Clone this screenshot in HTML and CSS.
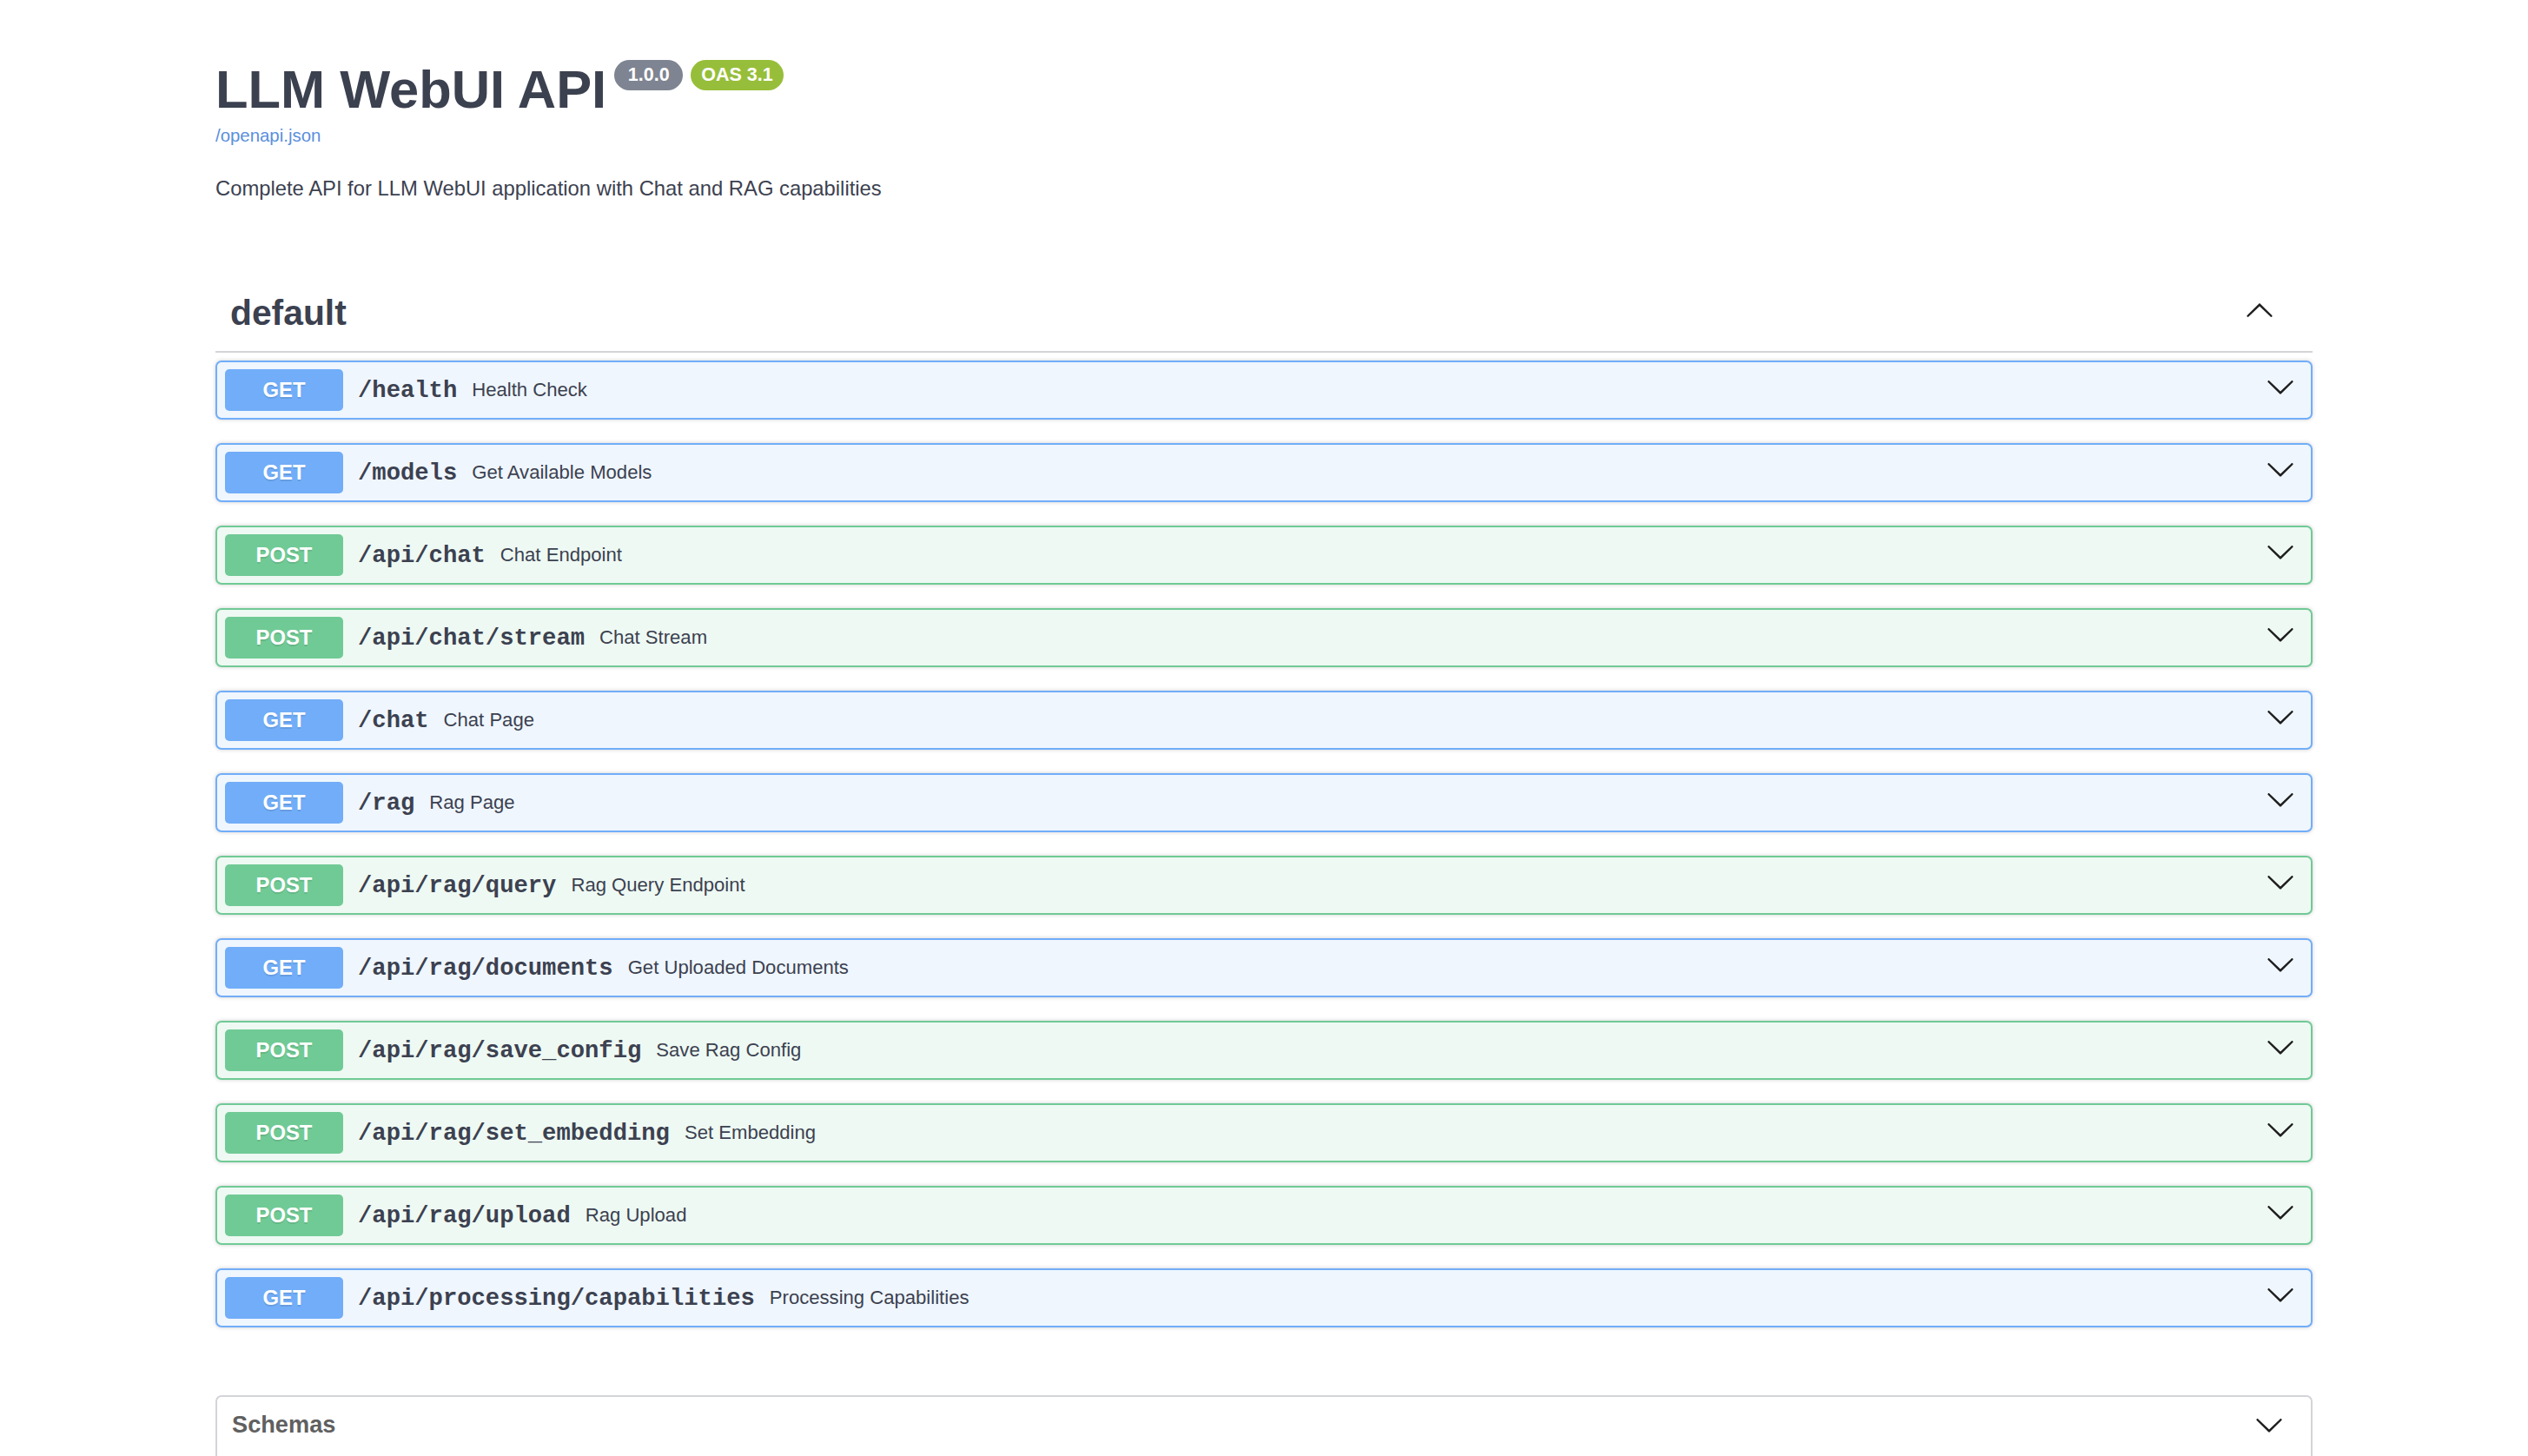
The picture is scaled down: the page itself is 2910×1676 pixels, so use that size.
FILE: index.html
```html
<!DOCTYPE html>
<html lang="en">
<head>
<meta charset="utf-8">
<title>LLM WebUI API</title>
<link rel="stylesheet" href="styles.css">
</head>
<body>
<div class="wrapper">
  <div class="info">
    <div class="title-row">
      <h2 class="title">LLM WebUI API</h2>
      <span class="badge badge-version">1.0.0</span>
      <span class="badge badge-oas">OAS 3.1</span>
    </div>
    <a class="base-url" href="#">/openapi.json</a>
    <p class="desc">Complete API for LLM WebUI application with Chat and RAG capabilities</p>
  </div>

  <section class="tag-section">
    <h3 class="tag">
      <span class="tag-name">default</span>
      <span class="tag-toggle">
        <svg class="chev" viewBox="0 0 20 20" width="34" height="34"><path transform="rotate(180 10 10)" d="M17.418 6.109c.272-.268.709-.268.979 0s.271.701 0 .969l-7.908 7.83c-.27.268-.707.268-.979 0l-7.908-7.83c-.27-.268-.27-.701 0-.969.271-.268.709-.268.979 0L10 13.25l7.418-7.141z"/></svg>
      </span>
    </h3>
    <div class="ops">
      <div class="op op-get"><span class="method">GET</span><span class="path">/health</span><span class="summary">Health Check</span><svg class="chev op-chev" viewBox="0 0 20 20" width="34" height="34"><path d="M17.418 6.109c.272-.268.709-.268.979 0s.271.701 0 .969l-7.908 7.83c-.27.268-.707.268-.979 0l-7.908-7.83c-.27-.268-.27-.701 0-.969.271-.268.709-.268.979 0L10 13.25l7.418-7.141z"/></svg></div>
      <div class="op op-get"><span class="method">GET</span><span class="path">/models</span><span class="summary">Get Available Models</span><svg class="chev op-chev" viewBox="0 0 20 20" width="34" height="34"><path d="M17.418 6.109c.272-.268.709-.268.979 0s.271.701 0 .969l-7.908 7.83c-.27.268-.707.268-.979 0l-7.908-7.83c-.27-.268-.27-.701 0-.969.271-.268.709-.268.979 0L10 13.25l7.418-7.141z"/></svg></div>
      <div class="op op-post"><span class="method">POST</span><span class="path">/api/chat</span><span class="summary">Chat Endpoint</span><svg class="chev op-chev" viewBox="0 0 20 20" width="34" height="34"><path d="M17.418 6.109c.272-.268.709-.268.979 0s.271.701 0 .969l-7.908 7.83c-.27.268-.707.268-.979 0l-7.908-7.83c-.27-.268-.27-.701 0-.969.271-.268.709-.268.979 0L10 13.25l7.418-7.141z"/></svg></div>
      <div class="op op-post"><span class="method">POST</span><span class="path">/api/chat/stream</span><span class="summary">Chat Stream</span><svg class="chev op-chev" viewBox="0 0 20 20" width="34" height="34"><path d="M17.418 6.109c.272-.268.709-.268.979 0s.271.701 0 .969l-7.908 7.83c-.27.268-.707.268-.979 0l-7.908-7.83c-.27-.268-.27-.701 0-.969.271-.268.709-.268.979 0L10 13.25l7.418-7.141z"/></svg></div>
      <div class="op op-get"><span class="method">GET</span><span class="path">/chat</span><span class="summary">Chat Page</span><svg class="chev op-chev" viewBox="0 0 20 20" width="34" height="34"><path d="M17.418 6.109c.272-.268.709-.268.979 0s.271.701 0 .969l-7.908 7.83c-.27.268-.707.268-.979 0l-7.908-7.83c-.27-.268-.27-.701 0-.969.271-.268.709-.268.979 0L10 13.25l7.418-7.141z"/></svg></div>
      <div class="op op-get"><span class="method">GET</span><span class="path">/rag</span><span class="summary">Rag Page</span><svg class="chev op-chev" viewBox="0 0 20 20" width="34" height="34"><path d="M17.418 6.109c.272-.268.709-.268.979 0s.271.701 0 .969l-7.908 7.83c-.27.268-.707.268-.979 0l-7.908-7.83c-.27-.268-.27-.701 0-.969.271-.268.709-.268.979 0L10 13.25l7.418-7.141z"/></svg></div>
      <div class="op op-post"><span class="method">POST</span><span class="path">/api/rag/query</span><span class="summary">Rag Query Endpoint</span><svg class="chev op-chev" viewBox="0 0 20 20" width="34" height="34"><path d="M17.418 6.109c.272-.268.709-.268.979 0s.271.701 0 .969l-7.908 7.83c-.27.268-.707.268-.979 0l-7.908-7.83c-.27-.268-.27-.701 0-.969.271-.268.709-.268.979 0L10 13.25l7.418-7.141z"/></svg></div>
      <div class="op op-get"><span class="method">GET</span><span class="path">/api/rag/documents</span><span class="summary">Get Uploaded Documents</span><svg class="chev op-chev" viewBox="0 0 20 20" width="34" height="34"><path d="M17.418 6.109c.272-.268.709-.268.979 0s.271.701 0 .969l-7.908 7.83c-.27.268-.707.268-.979 0l-7.908-7.83c-.27-.268-.27-.701 0-.969.271-.268.709-.268.979 0L10 13.25l7.418-7.141z"/></svg></div>
      <div class="op op-post"><span class="method">POST</span><span class="path">/api/rag/save_config</span><span class="summary">Save Rag Config</span><svg class="chev op-chev" viewBox="0 0 20 20" width="34" height="34"><path d="M17.418 6.109c.272-.268.709-.268.979 0s.271.701 0 .969l-7.908 7.83c-.27.268-.707.268-.979 0l-7.908-7.83c-.27-.268-.27-.701 0-.969.271-.268.709-.268.979 0L10 13.25l7.418-7.141z"/></svg></div>
      <div class="op op-post"><span class="method">POST</span><span class="path">/api/rag/set_embedding</span><span class="summary">Set Embedding</span><svg class="chev op-chev" viewBox="0 0 20 20" width="34" height="34"><path d="M17.418 6.109c.272-.268.709-.268.979 0s.271.701 0 .969l-7.908 7.83c-.27.268-.707.268-.979 0l-7.908-7.83c-.27-.268-.27-.701 0-.969.271-.268.709-.268.979 0L10 13.25l7.418-7.141z"/></svg></div>
      <div class="op op-post"><span class="method">POST</span><span class="path">/api/rag/upload</span><span class="summary">Rag Upload</span><svg class="chev op-chev" viewBox="0 0 20 20" width="34" height="34"><path d="M17.418 6.109c.272-.268.709-.268.979 0s.271.701 0 .969l-7.908 7.83c-.27.268-.707.268-.979 0l-7.908-7.83c-.27-.268-.27-.701 0-.969.271-.268.709-.268.979 0L10 13.25l7.418-7.141z"/></svg></div>
      <div class="op op-get"><span class="method">GET</span><span class="path">/api/processing/capabilities</span><span class="summary">Processing Capabilities</span><svg class="chev op-chev" viewBox="0 0 20 20" width="34" height="34"><path d="M17.418 6.109c.272-.268.709-.268.979 0s.271.701 0 .969l-7.908 7.83c-.27.268-.707.268-.979 0l-7.908-7.83c-.27-.268-.27-.701 0-.969.271-.268.709-.268.979 0L10 13.25l7.418-7.141z"/></svg></div>
    </div>
  </section>

  <section class="models">
    <h4 class="models-head">
      <span class="models-title">Schemas</span>
      <svg class="chev" viewBox="0 0 20 20" width="34" height="34"><path d="M17.418 6.109c.272-.268.709-.268.979 0s.271.701 0 .969l-7.908 7.83c-.27.268-.707.268-.979 0l-7.908-7.83c-.27-.268-.27-.701 0-.969.271-.268.709-.268.979 0L10 13.25l7.418-7.141z"/></svg>
    </h4>
    <div class="models-body"></div>
  </section>
</div>
</body>
</html>
```

FILE: styles.css
```css
html, body {
  margin: 0;
  padding: 0;
  background: #ffffff;
  overflow: hidden;
}

body {
  font-family: "Liberation Sans", Arial, sans-serif;
  color: #3c4150;
}

.wrapper {
  max-width: 2482px;
  margin: 0 auto;
  padding: 68px 34px 0;
  box-sizing: border-box;
}

/* ---------- info ---------- */
.title-row {
  display: flex;
  align-items: flex-start;
}

.title {
  margin: 0;
  font-size: 61.4px;
  line-height: 70px;
  font-weight: 700;
  color: #3c4150;
}

.badge {
  display: inline-block;
  margin: 1px 0 0 9px;
  padding: 3px 12px 4px;
  border-radius: 57px;
  font-size: 21.5px;
  line-height: 28px;
  font-weight: 700;
  color: #ffffff;
  text-align: center;
}

.badge-version {
  background: #7e8491;
  min-width: 55px;
}

.badge-oas {
  background: #97be3a;
}

.base-url {
  display: block;
  margin-top: 6px;
  font-size: 20.4px;
  line-height: 24px;
  color: #5a8fdd;
  text-decoration: none;
}

.desc {
  margin: 35px 0 0;
  font-size: 23.8px;
  line-height: 28px;
  color: #3c4150;
}

/* ---------- tag ---------- */
.tag-section {
  margin-top: 92px;
}

.tag {
  display: flex;
  align-items: center;
  margin: 0 0 9px;
  padding: 14px 44px 20px 17px;
  border-bottom: 2px solid #d3d4d8;
}

.tag-name {
  flex: 1;
  font-size: 40.8px;
  line-height: 47px;
  font-weight: 700;
  color: #3c4150;
}

.tag-toggle {
  display: flex;
  margin-bottom: 6px;
}

.chev {
  display: block;
  fill: #1d1d1d;
  flex: none;
}

/* ---------- operations ---------- */
.ops {
  display: flex;
  flex-direction: column;
  gap: 27px;
}

.op {
  display: flex;
  align-items: center;
  height: 68px;
  box-sizing: border-box;
  padding: 8px 18px 8px 9px;
  border: 2px solid;
  border-radius: 7px;
  box-shadow: 0 0 5px rgba(0, 0, 0, 0.19);
}

.op-get {
  background: #eff6fe;
  border-color: #71adf8;
}

.op-post {
  background: #eef9f3;
  border-color: #70ca95;
}

.method {
  flex: none;
  min-width: 136px;
  padding: 10px 0;
  border-radius: 5px;
  font-size: 23.8px;
  line-height: 28px;
  font-weight: 700;
  color: #ffffff;
  text-align: center;
  text-shadow: 0 2px 0 rgba(0, 0, 0, 0.1);
}

.op-get .method {
  background: #71adf8;
}

.op-post .method {
  background: #70ca95;
}

.path {
  padding: 0 17px;
  font-family: "Liberation Mono", "Courier New", monospace;
  font-size: 27.2px;
  font-weight: 700;
  color: #3c4150;
}

.summary {
  flex: 1;
  font-size: 22.1px;
  color: #3c4150;
}

.op-chev {
  margin-bottom: 9px;
}

/* ---------- models ---------- */
.models {
  margin-top: 78px;
  border: 2px solid #d3d4d8;
  border-radius: 7px;
  height: 200px;
}

.models-head {
  display: flex;
  align-items: center;
  margin: 0;
  padding: 15px 31px 19px 17px;
}

.models-title {
  flex: 1;
  font-size: 27.2px;
  line-height: 34px;
  font-weight: 700;
  color: #606060;
}
```
